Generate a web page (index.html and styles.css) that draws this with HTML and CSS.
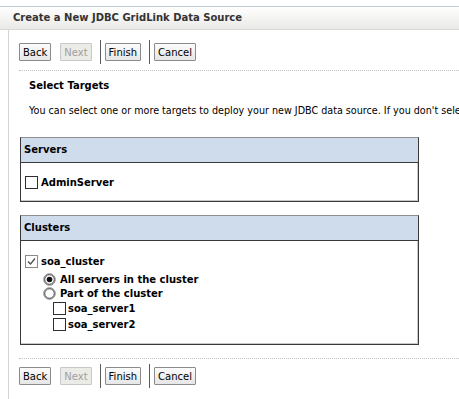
FILE: index.html
```
<!DOCTYPE html>
<html>
<head>
    <title>Create a New JDBC GridLink Data Source</title>
    <link rel="stylesheet" href="styles.css">
</head>
<body>

    <div class="title-bar">Create a New JDBC GridLink Data Source</div>

    <div class="content">
        <div class="button-bar">
            <button class="btn" type="button">Back</button>
            <button class="btn" type="button" disabled>Next</button>
            <span class="btn-sep"></span>
            <button class="btn" type="button">Finish</button>
            <span class="btn-sep"></span>
            <button class="btn" type="button">Cancel</button>
        </div>

        <div class="section">
            <h2 class="section-title">Select Targets</h2>
            <p class="section-help">You can select one or more targets to deploy your new JDBC data source. If you don't select a target, the data source will be created but not deployed.</p>

            <div class="target-box servers-box">
                <div class="target-head">Servers</div>
                <div class="target-body">
                    <label class="row">
                        <span class="check"></span>
                        <span class="row-label">AdminServer</span>
                    </label>
                </div>
            </div>

            <div class="target-box clusters-box">
                <div class="target-head">Clusters</div>
                <div class="target-body">
                    <label class="row">
                        <span class="check checked">
                            <svg width="11" height="11" viewBox="0 0 11 11"><path d="M2 5.5 L4.5 8 L9 2.5" fill="none" stroke="#4a4a4a" stroke-width="1.2"/></svg>
                        </span>
                        <span class="row-label">soa_cluster</span>
                    </label>
                    <div class="radio-list">
                        <label class="radio-row">
                            <svg class="radio" width="13" height="13" viewBox="0 0 13 13">
                                <circle cx="6.5" cy="6.5" r="5.8" fill="#fff" stroke="#8a8a8a" stroke-width="1"/>
                                <circle cx="6.5" cy="6.5" r="4.8" fill="none" stroke="#2b2b2b" stroke-width="0.9"/>
                                <circle cx="6.5" cy="6.5" r="2.8" fill="#111"/>
                            </svg>
                            <span class="row-label">All servers in the cluster</span>
                        </label>
                        <label class="radio-row">
                            <svg class="radio" width="13" height="13" viewBox="0 0 13 13">
                                <circle cx="6.5" cy="6.5" r="5.8" fill="#fff" stroke="#8a8a8a" stroke-width="1"/>
                                <circle cx="6.5" cy="6.5" r="4.8" fill="none" stroke="#2b2b2b" stroke-width="0.9"/>
                            </svg>
                            <span class="row-label">Part of the cluster</span>
                        </label>
                    </div>
                    <div class="server-list">
                        <label class="server-row">
                            <span class="check"></span>
                            <span class="row-label">soa_server1</span>
                        </label>
                        <label class="server-row">
                            <span class="check"></span>
                            <span class="row-label">soa_server2</span>
                        </label>
                    </div>
                </div>
            </div>
        </div>

        <div class="button-bar bottom-bar">
            <button class="btn" type="button">Back</button>
            <button class="btn" type="button" disabled>Next</button>
            <span class="btn-sep"></span>
            <button class="btn" type="button">Finish</button>
            <span class="btn-sep"></span>
            <button class="btn" type="button">Cancel</button>
        </div>
    </div>

</body>
</html>
```

FILE: styles.css
```
body {
    margin: 0;
    padding-top: 6px;
    font-family: "DejaVu Sans", Verdana, sans-serif;
    font-size: 10px;
    color: #000;
    background: #fff;
    overflow: hidden;
}

.title-bar {
    height: 22px;
    line-height: 22px;
    padding-left: 13px;
    border-top: 1px solid #c3cbd3;
    border-bottom: 1px solid #d8d8d8;
    background: linear-gradient(#ffffff, #e9e9e7);
    font-weight: bold;
    font-size: 10px;
    color: #333;
    white-space: nowrap;
}

.content {
    margin-left: 8px;
    border-left: 1px solid #d3d3d3;
    padding-left: 10px;
    height: 369px;
}

.button-bar {
    display: flex;
    align-items: center;
    height: 24px;
    padding: 10px 0 6px 0;
}

.bottom-bar {
    padding-top: 5px;
    border-top: 1px dotted #c2c2c2;
}

.btn {
    height: 18px;
    padding: 0 3px;
    margin-right: 9px;
    font-family: inherit;
    font-size: 10px;
    color: #000;
    background: linear-gradient(#fcfcfc, #e6e6e6);
    border: 1px solid #8b8b8b;
    border-radius: 1px;
}

.btn:disabled {
    color: #a0a0a0;
    background: #ebebe8;
    border-color: #c7c7c7;
}

.btn-sep {
    width: 1px;
    height: 24px;
    background: #5a5a5a;
    margin: 0 4px 0 -1px;
}

.section {
    border-top: 1px dotted #c2c2c2;
    padding: 7px 0 13px 0;
}

.section-title {
    margin: 0 0 9px 10px;
    font-size: 10px;
    line-height: 16px;
    font-weight: bold;
}

.section-help {
    margin: 0 0 18px 10px;
    font-size: 9.6px;
    line-height: 16px;
    white-space: nowrap;
}

.target-box {
    width: 397px;
    margin-left: 1px;
    border: 1px solid #3a3a3a;
    border-top-color: #8f8f8f;
    box-shadow: inset -1px -1px 0 #c9c9c9;
}

.servers-box {
    margin-bottom: 13px;
}

.target-head {
    height: 24px;
    line-height: 24px;
    padding-left: 3px;
    background: #cfdcec;
    border-bottom: 1px solid #3a3a3a;
    font-weight: bold;
    font-size: 10px;
}

.target-body {
    padding: 10px 0 10px 4px;
    font-weight: bold;
    font-size: 10px;
}

.clusters-box .target-body {
    padding: 11px 0 12px 4px;
}

.row,
.radio-row,
.server-row {
    display: flex;
    align-items: center;
}

.row {
    height: 18px;
}

.radio-list {
    margin-top: 2px;
    padding-left: 18px;
}

.radio-row {
    height: 14px;
}

.radio {
    margin-right: 4px;
}

.server-list {
    padding-left: 28px;
}

.server-row {
    height: 16px;
}

.check {
    display: inline-block;
    box-sizing: border-box;
    width: 13px;
    height: 13px;
    border: 1px solid #2e2e2e;
    background: #fff;
    margin-right: 3px;
}

.check.checked {
    border-color: #8a8a8a;
}

.check svg {
    display: block;
}

.server-row .check {
    margin-right: 2px;
}
```
